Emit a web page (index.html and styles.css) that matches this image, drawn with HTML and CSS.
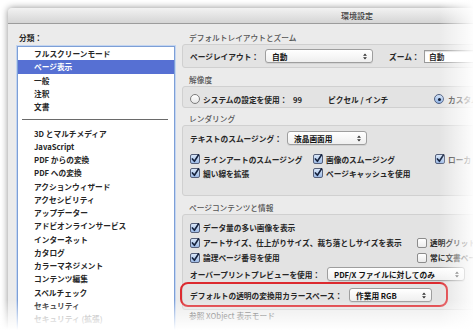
FILE: index.html
```html
<!DOCTYPE html>
<html>
<head>
  <title>環境設定</title>
  <link rel="stylesheet" href="styles.css">
</head>
<body>
  <div class="window">
    <div class="titlebar">環境設定</div>
    <div class="content">
      <div class="sidebar">
        <div class="side-label">分類：</div>
        <ul class="category-list">
          <li>フルスクリーンモード</li>
          <li class="selected">ページ表示</li>
          <li>一般</li>
          <li>注釈</li>
          <li>文書</li>
          <li class="separator"></li>
          <li>3D とマルチメディア</li>
          <li>JavaScript</li>
          <li>PDF からの変換</li>
          <li>PDF への変換</li>
          <li>アクションウィザード</li>
          <li>アクセシビリティ</li>
          <li>アップデーター</li>
          <li>アドビオンラインサービス</li>
          <li>インターネット</li>
          <li>カタログ</li>
          <li>カラーマネジメント</li>
          <li>コンテンツ編集</li>
          <li>スペルチェック</li>
          <li>セキュリティ</li>
          <li class="dim">セキュリティ (拡張)</li>
        </ul>
      </div>

      <div class="panel">
        <div class="section-label">デフォルトレイアウトとズーム</div>
        <div class="group">
          <div class="row">
            <span class="lbl-layout">ページレイアウト：</span>
            <span class="popup popup-layout">自動
              <svg class="updown" viewBox="0 0 5 9"><path d="M0 3.5L2.5 0.5L5 3.5ZM0 5.5L2.5 8.5L5 5.5Z"/></svg>
            </span>
            <span class="lbl-zoom">ズーム：</span>
            <span class="combo">自動</span>
          </div>
        </div>

        <div class="section-label gap-6">解像度</div>
        <div class="group group-res">
          <div class="row row-res">
            <span class="radio"></span>
            <span class="lbl-system">システムの設定を使用：</span>
            <span class="lbl-dpi">99</span>
            <span class="lbl-unit">ピクセル / インチ</span>
            <span class="radio on"></span>
            <span class="lbl-custom">カスタム</span>
          </div>
        </div>

        <div class="section-label gap-5">レンダリング</div>
        <div class="group group-render">
          <div class="row">
            <span class="lbl-smooth">テキストのスムージング：</span>
            <span class="popup popup-smooth">液晶画面用
              <svg class="updown" viewBox="0 0 5 9"><path d="M0 3.5L2.5 0.5L5 3.5ZM0 5.5L2.5 8.5L5 5.5Z"/></svg>
            </span>
          </div>
          <div class="checks checks-render">
            <div class="check"><span class="cb"><svg viewBox="0 0 8 8"><path d="M1.4 3.9L3.4 6.3L7.6 -0.2"/></svg></span><span>ラインアートのスムージング</span></div>
            <div class="check"><span class="cb"><svg viewBox="0 0 8 8"><path d="M1.4 3.9L3.4 6.3L7.6 -0.2"/></svg></span><span>画像のスムージング</span></div>
            <div class="check"><span class="cb"><svg viewBox="0 0 8 8"><path d="M1.4 3.9L3.4 6.3L7.6 -0.2"/></svg></span><span>ローカ</span></div>
            <div class="check"><span class="cb"><svg viewBox="0 0 8 8"><path d="M1.4 3.9L3.4 6.3L7.6 -0.2"/></svg></span><span>細い線を拡張</span></div>
            <div class="check"><span class="cb"><svg viewBox="0 0 8 8"><path d="M1.4 3.9L3.4 6.3L7.6 -0.2"/></svg></span><span>ページキャッシュを使用</span></div>
          </div>
        </div>

        <div class="section-label gap-6">ページコンテンツと情報</div>
        <div class="group group-content">
          <div class="checks checks-content">
            <div class="check"><span class="cb"><svg viewBox="0 0 8 8"><path d="M1.4 3.9L3.4 6.3L7.6 -0.2"/></svg></span><span>データ量の多い画像を表示</span></div>
            <div></div>
            <div class="check"><span class="cb"><svg viewBox="0 0 8 8"><path d="M1.4 3.9L3.4 6.3L7.6 -0.2"/></svg></span><span>アートサイズ、仕上がりサイズ、裁ち落としサイズを表示</span></div>
            <div class="check"><span class="cb off"></span><span>透明グリッド</span></div>
            <div class="check"><span class="cb"><svg viewBox="0 0 8 8"><path d="M1.4 3.9L3.4 6.3L7.6 -0.2"/></svg></span><span>論理ページ番号を使用</span></div>
            <div class="check"><span class="cb off"></span><span>常に文書ペー</span></div>
          </div>
          <div class="row row-overprint">
            <span class="lbl-overprint">オーバープリントプレビューを使用：</span>
            <span class="popup popup-overprint">PDF/X ファイルに対してのみ
              <svg class="updown" viewBox="0 0 5 9"><path d="M0 3.5L2.5 0.5L5 3.5ZM0 5.5L2.5 8.5L5 5.5Z"/></svg>
            </span>
          </div>
          <div class="highlight">
            <div class="row">
              <span class="lbl-blend">デフォルトの透明の変換用カラースペース：</span>
              <span class="popup popup-blend">作業用 RGB
                <svg class="updown" viewBox="0 0 5 9"><path d="M0 3.5L2.5 0.5L5 3.5ZM0 5.5L2.5 8.5L5 5.5Z"/></svg>
              </span>
            </div>
          </div>
        </div>

        <div class="section-label">参照 XObject 表示モード</div>
      </div>
    </div>
  </div>

  <div class="fade-right"></div>
  <div class="fade-bottom"></div>
</body>
</html>
```

FILE: styles.css
```css
body {
  margin: 0;
  width: 473px;
  height: 334px;
  overflow: hidden;
  position: relative;
  background: #fff;
  font-family: "Noto Sans CJK JP", "Noto Sans", sans-serif;
  font-size: 7.7px;
  font-weight: 700;
  color: #262626;
}

.window {
  margin: 8px 0 0 8px;
  width: 465px;
  height: 326px;
  overflow: hidden;
  background: #ebebeb;
  border-radius: 4px 0 0 0;
  box-shadow: 0 0 7px rgba(0, 0, 0, 0.45);
}

/* the real dialog is wider than the crop; the title sits at its centre */
.titlebar {
  height: 15px;
  line-height: 15px;
  padding-left: 233px;
  border-bottom: 1px solid #9c9c9c;
  border-radius: 4px 0 0 0;
  background: linear-gradient(#f2f2f2, #d5d5d5);
  text-align: center;
  font-size: 8px;
  font-weight: 500;
  color: #3a3a3a;
}

.content {
  display: flex;
  padding-top: 8px;
}

/* left column */
.sidebar {
  width: 158px;
  flex: none;
  margin-left: 9px;
}

.side-label {
  line-height: 12px;
  padding-left: 2px;
  margin-bottom: 2px;
}

.category-list {
  list-style: none;
  margin: 0;
  padding: 0;
  height: 300px;
  background: #fff;
  border: 1px solid #7d9fd6;
  box-shadow: 0 0 0 1px #c3d5f1;
}

.category-list li {
  line-height: 13.25px;
  height: 13.25px;
  padding-left: 16px;
  white-space: nowrap;
}

.category-list li.selected {
  background: #5670d3;
  color: #fff;
}

.category-list li.separator {
  display: flex;
  align-items: center;
  padding: 0 6px 0 4px;
}

.category-list li.separator::before {
  content: '';
  flex: 1;
  height: 1px;
  background: #6a6a6a;
}

.category-list li.dim {
  color: #9a9a9a;
}

/* right column */
.panel {
  margin-left: 7px;
  width: 320px;
  flex: none;
}

.section-label {
  line-height: 12px;
  padding-left: 7px;
  color: #555;
  font-weight: 500;
}

.gap-5 { margin-top: 5px; }
.gap-6 { margin-top: 6px; }

.group {
  background: #e3e3e3;
  border: 1px solid #d0d0d0;
  border-radius: 3px;
  padding: 4px 7px;
}

.row {
  display: flex;
  align-items: center;
  height: 14px;
  white-space: nowrap;
}

.popup {
  height: 14px;
  box-sizing: border-box;
  flex: none;
  display: flex;
  align-items: center;
  justify-content: space-between;
  padding: 0 5px 0 6px;
  border: 1px solid #9e9e9e;
  border-radius: 3px;
  background: linear-gradient(#ffffff, #efefef);
  box-shadow: 0 1px 0 rgba(0, 0, 0, 0.07);
  color: #111;
}

.updown {
  width: 4px;
  height: 7px;
  fill: #333;
  flex: none;
}

.lbl-layout { width: 75px; flex: none; }
.popup-layout { width: 108px; }
.lbl-zoom { margin-left: 16px; width: 35px; flex: none; }

.combo {
  width: 60px;
  height: 13px;
  box-sizing: border-box;
  padding-left: 4px;
  line-height: 11px;
  background: #fff;
  border: 1px solid #9a9a9a;
  border-right: none;
  box-shadow: inset 0 1px 1px rgba(0, 0, 0, 0.15);
}

.group-res {
  padding-top: 6px;
  padding-bottom: 2px;
}

.row-res {
  height: 12px;
}

.radio {
  width: 10px;
  height: 10px;
  box-sizing: border-box;
  flex: none;
  border-radius: 50%;
  border: 1px solid #7c7c7c;
  background: linear-gradient(#ffffff, #e6e6e6);
  display: flex;
  align-items: center;
  justify-content: center;
}

.radio.on {
  border-color: #4d5e80;
  background: linear-gradient(#d3e3f7, #8fb2e5);
}

.radio.on::after {
  content: '';
  width: 3px;
  height: 3px;
  border-radius: 50%;
  background: #0f1a30;
}

.lbl-system { margin-left: 3px; width: 90px; flex: none; }
.lbl-dpi { width: 35px; flex: none; }
.lbl-unit { width: 106px; flex: none; }
.lbl-custom { margin-left: 4px; }

.group-render {
  padding-top: 5px;
  padding-bottom: 15px;
}

.lbl-smooth { width: 97px; flex: none; }
.popup-smooth { width: 80px; }

.checks {
  display: grid;
  white-space: nowrap;
}

.checks-render {
  margin-top: 7px;
  grid-template-columns: 123px 122px 30px;
  grid-auto-rows: 14px;
}

.checks-content {
  grid-template-columns: 227px 50px;
  grid-auto-rows: 15px;
}

.check {
  display: flex;
  align-items: center;
}

.check .cb {
  margin-right: 3px;
}

.cb {
  width: 10px;
  height: 10px;
  box-sizing: border-box;
  flex: none;
  border: 1px solid #56607a;
  border-radius: 2px;
  background: linear-gradient(#d8e6f8, #9dbbe7);
  display: flex;
  align-items: center;
  justify-content: center;
}

.cb svg {
  width: 8px;
  height: 8px;
  overflow: visible;
}

.cb svg path {
  fill: none;
  stroke: #16233f;
  stroke-width: 1.6;
  stroke-linecap: round;
  stroke-linejoin: round;
}

.cb.off {
  border-color: #8c8c8c;
  background: linear-gradient(#ffffff, #ebebeb);
}

.group-content {
  padding-top: 5px;
  padding-bottom: 2px;
}

.row-overprint { margin-top: 2px; }
.lbl-overprint { width: 137px; flex: none; }
.popup-overprint { width: 138px; }

.highlight {
  margin-top: 1px;
  margin-left: -10px;
  width: 268px;
  box-sizing: border-box;
  padding: 4px 8px 3px;
  border: 2px solid #dc2a2f;
  border-radius: 8px;
}

.lbl-blend { width: 159px; flex: none; }
.popup-blend { width: 83px; }

/* white fades over the screenshot edges */
.fade-right {
  position: absolute;
  top: 0;
  right: 0;
  width: 34px;
  height: 334px;
  background: linear-gradient(to right, rgba(255, 255, 255, 0), rgba(255, 255, 255, 0.92));
}

.fade-bottom {
  position: absolute;
  left: 0;
  bottom: 0;
  width: 473px;
  height: 34px;
  background: linear-gradient(rgba(255, 255, 255, 0), #fff 88%);
}
```
